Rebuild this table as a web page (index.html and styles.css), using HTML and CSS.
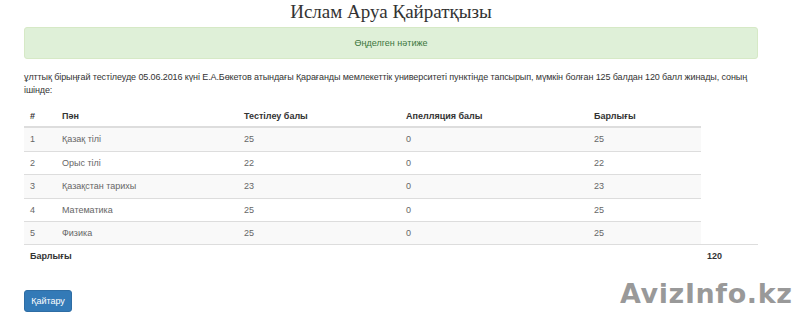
FILE: index.html
```html
<!DOCTYPE html>
<html lang="kk">
<head>
<meta charset="utf-8">
<title>Нәтиже</title>
<link rel="stylesheet" href="styles.css">
</head>
<body>
<div class="page">
  <h1 class="title">Ислам Аруа Қайратқызы</h1>
  <div class="alert">Өңделген нәтиже</div>
  <p class="intro">ұлттық бірыңғай тестілеуде 05.06.2016 күні Е.А.Бөкетов атындағы Қарағанды мемлекеттік университеті пунктінде тапсырып, мүмкін болған 125 балдан 120 балл жинады, соның ішінде:</p>
  <table class="results">
    <colgroup>
      <col class="c1"><col class="c2"><col class="c3"><col class="c4"><col class="c5"><col class="c6">
    </colgroup>
    <thead>
      <tr><th>#</th><th>Пән</th><th>Тестілеу балы</th><th>Апелляция балы</th><th>Барлығы</th></tr>
    </thead>
    <tbody>
      <tr><td>1</td><td>Қазақ тілі</td><td>25</td><td>0</td><td>25</td></tr>
      <tr><td>2</td><td>Орыс тілі</td><td>22</td><td>0</td><td>22</td></tr>
      <tr><td>3</td><td>Қазақстан тарихы</td><td>23</td><td>0</td><td>23</td></tr>
      <tr><td>4</td><td>Математика</td><td>25</td><td>0</td><td>25</td></tr>
      <tr><td>5</td><td>Физика</td><td>25</td><td>0</td><td>25</td></tr>
      <tr class="total"><th colspan="5">Барлығы</th><th>120</th></tr>
    </tbody>
  </table>
  <button class="btn" type="button">Қайтару</button>
</div>
<div class="watermark">AvizInfo.kz</div>
</body>
</html>
```

FILE: styles.css
```css
html, body {
  margin: 0;
  padding: 0;
  background: #fff;
}
body {
  font-family: "Liberation Sans", Arial, sans-serif;
  font-size: 9px;
  color: #333;
  width: 800px;
  height: 312px;
  overflow: hidden;
  position: relative;
}
.page {
  width: 734px;
  margin-left: 24px;
}
.title {
  font-family: "Liberation Serif", "Times New Roman", serif;
  font-weight: normal;
  font-size: 19px;
  line-height: 24px;
  text-align: center;
  margin: 0 0 3px;
  color: #333;
}
.alert {
  height: 30px;
  line-height: 30px;
  background: #dff0d8;
  border: 1px solid #d6e9c6;
  border-radius: 3px;
  color: #3c763d;
  text-align: center;
  font-size: 9px;
}
.intro {
  margin: 12px 0 0;
  line-height: 13px;
  font-size: 9px;
  letter-spacing: -0.1px;
  color: #333;
}
.results {
  width: 734px;
  border-collapse: collapse;
  table-layout: fixed;
  margin-top: 8px;
}
.c1 { width: 32px; }
.c2 { width: 182px; }
.c3 { width: 162px; }
.c4 { width: 188px; }
.c5 { width: 113px; }
.c6 { width: 57px; }
.results th, .results td {
  text-align: left;
  padding: 5px 6px;
  line-height: 12.4px;
  font-size: 9px;
}
.results thead th {
  font-weight: bold;
  color: #333;
  border-bottom: 2px solid #ddd;
  padding-bottom: 4px;
}
.results tbody td {
  color: #666;
  border-top: 1px solid #ddd;
}
.results tbody tr:nth-child(odd) td {
  background: #f9f9f9;
}
.results tbody tr:first-child td {
  border-top: 0;
}
.results .total th {
  border-top: 1px solid #ddd;
  font-weight: bold;
  color: #333;
  padding-top: 5px;
}
.btn {
  margin-top: 22px;
  display: block;
  background: #337ab7;
  border: 1px solid #2e6da4;
  border-radius: 3px;
  color: #fff;
  font-family: "Liberation Sans", Arial, sans-serif;
  font-size: 9px;
  line-height: 12px;
  padding: 4px 0;
  text-align: center;
  width: 48px;
  height: 22px;
}
.watermark {
  position: absolute;
  left: 620px;
  top: 278px;
  font-family: "DejaVu Sans", sans-serif;
  font-weight: bold;
  font-size: 27px;
  letter-spacing: 0.6px;
  color: rgba(120, 120, 120, 0.75);
  text-shadow: 0 0 2px #fff, 1px 1px 0 #fff;
}
```
